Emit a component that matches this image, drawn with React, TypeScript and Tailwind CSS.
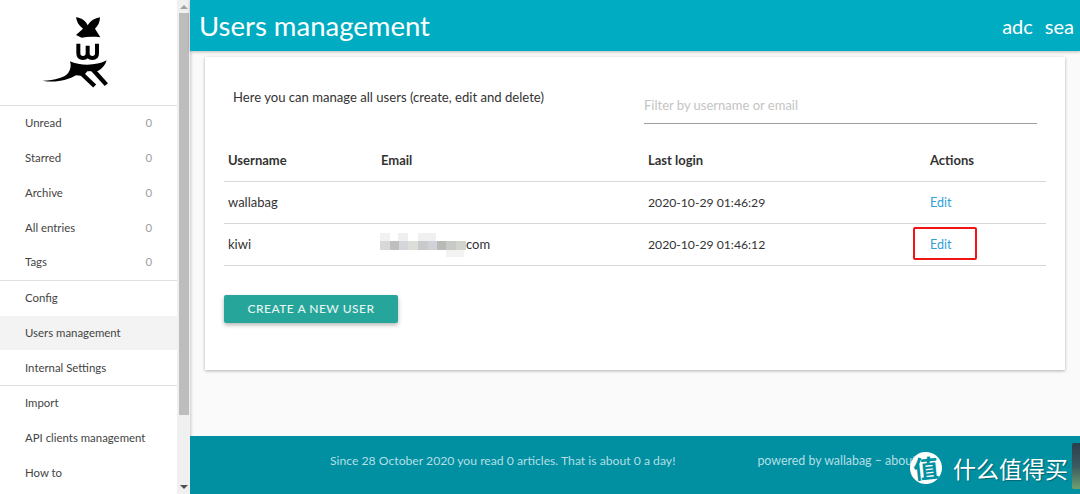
const topNav = [
  ["Unread", "0"],
  ["Starred", "0"],
  ["Archive", "0"],
  ["All entries", "0"],
  ["Tags", "0"],
];
const midNav = ["Config", "Users management", "Internal Settings"];
const lastNav = ["Import", "API clients management", "How to"];

const mosaic = [
  { x: 0, y: 0, w: 10, h: 8, c: "#f1f1f1" },
  { x: 18, y: 0, w: 10, h: 8, c: "#efefef" },
  { x: 38, y: 0, w: 18, h: 8, c: "#f0f0f0" },
  { x: 0, y: 8, w: 10, h: 9, c: "#d8d8d8" },
  { x: 10, y: 8, w: 9, h: 9, c: "#bfbfbf" },
  { x: 19, y: 8, w: 9, h: 9, c: "#d3d6da" },
  { x: 28, y: 8, w: 10, h: 9, c: "#dcdfd9" },
  { x: 38, y: 8, w: 10, h: 9, c: "#c8cacb" },
  { x: 48, y: 8, w: 9, h: 9, c: "#cfd2d8" },
  { x: 57, y: 8, w: 9, h: 9, c: "#b9b9b7" },
  { x: 66, y: 8, w: 10, h: 9, c: "#c8cac8" },
  { x: 76, y: 8, w: 10, h: 9, c: "#cfd4cd" },
  { x: 66, y: 17, w: 18, h: 7, c: "#f3f3f3" },
];

// coords are the logo's own, 3x its drawn size
function Logo() {
  return (
    <svg width="70" height="75" viewBox="120 45 210 225" fill="none">
      <path d="M228 52 C245 54 256 62 263 76 C272 62 284 54 300 52 C300 66 294 78 285 86 L301 112 C280 110 262 110 245 113 L228 105 L249 86 C237 78 230 66 228 52 Z" fill="#000" />
      <path d="M235 131 V160 Q235 174 249 174 Q263 174 263 160 V137 M263 160 Q263 174 277 174 Q291 174 291 160 V131" stroke="#000" strokeWidth="12" />
      <path d="M210 184 C240 198 290 198 320 181 C316 196 306 206 294 213 L262 214 L250 228 L228 226 C205 240 165 250 128 242 C165 240 195 232 205 218 C212 208 214 196 210 184 Z" fill="#000" />
      <path d="M246 222 L284 258 M274 204 L319 254" stroke="#000" strokeWidth="13" />
    </svg>
  );
}

function NavRow({ label, count, active }: { label: string; count?: string; active?: boolean }) {
  return (
    <div className={`flex h-[34.75px] items-center justify-between pb-[1px] pl-[25px] pr-[25px] text-[#444] ${active ? "bg-[#f3f3f3]" : ""}`}>
      <span>{label}</span>
      {count && <span className="text-[#9e9e9e]">{count}</span>}
    </div>
  );
}

export default function App() {
  return (
    <div className="relative flex h-[494px] w-[1080px] overflow-hidden bg-[#fafafa] font-['Lato','Noto_Sans',sans-serif] text-[13px]">
      <aside className="flex h-full w-[190px] shrink-0 shadow-[1px_0_3px_rgba(0,0,0,0.2)]">
        <div className="w-[177px] shrink-0 bg-white text-[11.4px]">
          <div className="h-[105px] pl-[40px] pt-[15px]">
            <Logo />
          </div>
          <div className="border-t border-[#e0e0e0]">
            {topNav.map(([label, count]) => (
              <NavRow key={label} label={label} count={count} />
            ))}
          </div>
          <div className="border-t border-[#e0e0e0]">
            {midNav.map((label) => (
              <NavRow key={label} label={label} active={label === "Users management"} />
            ))}
          </div>
          <div className="border-t border-[#e0e0e0]">
            {lastNav.map((label) => (
              <NavRow key={label} label={label} />
            ))}
          </div>
        </div>
        <div className="flex w-[13px] shrink-0 flex-col items-center justify-between bg-[#f0f0f0] pb-[5px] pt-[5px]">
          <div className="h-0 w-0 border-x-[4px] border-b-[4px] border-x-transparent border-b-[#a0a0a0]" />
          <div className="mb-auto mt-[4px] h-[402px] w-[10px] bg-[#bdbdbd]" />
          <div className="h-0 w-0 border-x-[4px] border-t-[4px] border-x-transparent border-t-[#505050]" />
        </div>
      </aside>

      <main className="flex h-full min-w-0 flex-1 flex-col">
        <header className="flex h-[51px] shrink-0 items-center justify-between bg-[#00acc1] pl-[9px] pr-[6px] text-white shadow-[0_1px_3px_rgba(0,0,0,0.25)]">
          <h1 className="pt-[1px] text-[27.5px] font-normal">Users management</h1>
          <div className="flex gap-[12px] text-[20px]">
            <span>adc</span>
            <span>sea</span>
          </div>
        </header>

        <section className="mx-[15px] mt-[6px] h-[313px] bg-white px-[19px] shadow-[0_1px_3px_rgba(0,0,0,0.3)]">
          <div className="flex h-[67px] items-start justify-between pl-[9px] pr-[9px]">
            <p className="mt-[31px] text-[13.1px] text-[#333]">Here you can manage all users (create, edit and delete)</p>
            <div className="mt-[39px] h-[28px] w-[393px] border-b border-[#9e9e9e] text-[#c4c4c4]">Filter by username or email</div>
          </div>
          <table className="mt-[15px] w-[822px] table-fixed text-left text-[#333]">
            <thead>
              <tr className="h-[42px] border-b border-[#d8d8d8]">
                <th className="w-[157px] pl-[4px] pt-[2px] font-bold">Username</th>
                <th className="w-[267px] pt-[2px] font-bold">Email</th>
                <th className="w-[282px] pt-[2px] font-bold">Last login</th>
                <th className="pt-[2px] font-bold">Actions</th>
              </tr>
            </thead>
            <tbody>
              <tr className="h-[42px] border-b border-[#d8d8d8]">
                <td className="pl-[4px] pt-[2px]">wallabag</td>
                <td></td>
                <td className="pt-[2px] text-[12.2px]">2020-10-29 01:46:29</td>
                <td className="pt-[2px] text-[12.5px] text-[#2f9fd8]">Edit</td>
              </tr>
              <tr className="h-[42px] border-b border-[#d8d8d8]">
                <td className="pl-[4px] pt-[2px]">kiwi</td>
                <td className="pt-[2px]">
                  <div className="flex items-center">
                    <svg width="86" height="24" viewBox="0 0 86 24" className="-ml-[1px] blur-[0.5px]">
                      {mosaic.map((m, i) => (
                        <rect key={i} x={m.x} y={m.y} width={m.w} height={m.h} fill={m.c} />
                      ))}
                    </svg>
                    <span>com</span>
                  </div>
                </td>
                <td className="pt-[2px] text-[12.2px]">2020-10-29 01:46:12</td>
                <td className="pt-[2px] text-[12.5px]">
                  <span className="relative text-[#2f9fd8]">
                    Edit
                    <span className="absolute -left-[17px] -top-[10px] h-[33px] w-[64px] rounded-[2px] border-2 border-[#f01414]" />
                  </span>
                </td>
              </tr>
            </tbody>
          </table>
          <button className="mt-[29px] h-[28px] w-[174px] rounded-[2px] bg-[#26a69a] text-[12px] font-medium tracking-[0.5px] text-[#e6f5f3] shadow-[0_2px_4px_rgba(0,0,0,0.3)]">
            CREATE A NEW USER
          </button>
        </section>

        <footer className="mt-auto flex h-[58px] shrink-0 items-center bg-[#0090a1] pb-[8px] pl-[140px] text-[12.2px] text-[#b5dfe5]">
          <span>Since 28 October 2020 you read 0 articles. That is about 0 a day!</span>
          <span className="ml-[82px] whitespace-nowrap text-[12.4px]">powered by wallabag – about</span>
        </footer>
      </main>

      <div className="absolute left-[910px] top-[451px] flex items-center gap-[11px] font-['Noto_Sans_CJK_SC',sans-serif] text-white [text-shadow:1px_1px_1px_rgba(0,0,0,0.3)]">
        <div className="flex h-[32px] w-[32px] -rotate-6 items-center justify-center rounded-full bg-white text-[25px] font-bold text-[#0090a1] [text-shadow:none]">值</div>
        <span className="text-[23px]">什么值得买</span>
      </div>
      <div className="absolute left-[1072px] top-[443px] h-[46px] w-[10px] rounded-[2px] bg-gradient-to-b from-[#2c3e4c] via-[#3c5a60] to-[#6fa06f]" />
    </div>
  );
}
